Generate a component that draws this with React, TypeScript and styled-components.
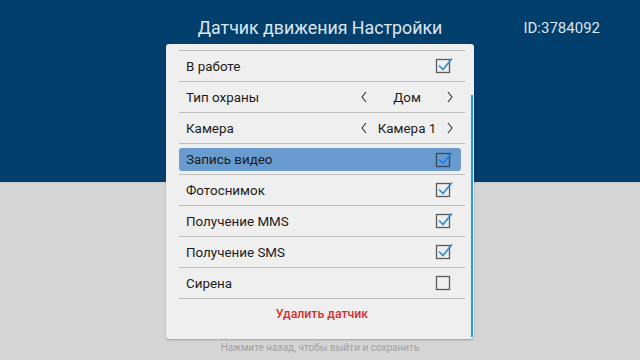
import React from 'react';
import styled, { createGlobalStyle } from 'styled-components';

const GlobalStyle = createGlobalStyle`
  html, body {
    margin: 0;
    padding: 0;
    width: 640px;
    height: 360px;
    overflow: hidden;
  }
  body {
    font-family: Roboto, "Noto Sans", "Liberation Sans", sans-serif;
  }
`

const Screen = styled.div`
  width: 640px;
  height: 360px;
  display: flex;
  flex-direction: column;
  align-items: center;
  background: linear-gradient(#023f6c 0, #023f6c 182px, #c9c9c9 182px, #d5d5d5 184px, #d5d5d5 100%);
`

const TopBar = styled.div`
  width: 100%;
  height: 44px;
  box-sizing: border-box;
  padding: 16px 40px 0 40px;
  display: grid;
  grid-template-columns: 1fr auto 1fr;
  align-items: start;
`

const Title = styled.div`
  grid-column: 2;
  font-size: 17.8px;
  line-height: 24px;
  color: #dde6ef;
`

const DeviceId = styled.div`
  grid-column: 3;
  justify-self: end;
  font-size: 15px;
  line-height: 24px;
  color: #dde6ef;
`

const Card = styled.div`
  position: relative;
  width: 308px;
  height: 295px;
  box-sizing: border-box;
  padding: 6px 9px 0 13px;
  background: #efefef;
  border-radius: 3px;
  box-shadow: 0 1px 2px rgba(0, 0, 0, 0.25);
`

const Scrollbar = styled.div`
  position: absolute;
  left: 305px;
  top: 51px;
  width: 2px;
  height: 242px;
  background: #2c9be2;
  box-shadow: 0 0 1px #8fd0f5;
`

const List = styled.div`
  display: flex;
  flex-direction: column;
`

const Row = styled.div<{ $active?: boolean }>`
  height: 31px;
  box-sizing: border-box;
  border-top: 1px solid #bcbcbc;
  padding: ${p => (p.$active ? '4px 4px 3px 0' : '0')};
`

const RowInner = styled.div<{ $active?: boolean }>`
  height: 100%;
  display: flex;
  align-items: center;
  padding: 0 ${p => (p.$active ? '8px' : '12px')} 0 7px;
  background: ${p => (p.$active ? '#6a9bcf' : 'transparent')};
  border-radius: 3px;
  font-size: 13.4px;
  color: #1b1b1b;
`

const Label = styled.span`
  flex: 1;
`

const Picker = styled.div`
  width: 94px;
  display: flex;
  align-items: center;
  margin-right: -1px;
`

const PickerValue = styled.span`
  flex: 1;
  text-align: center;
`

const DeleteRow = styled(Row)`
  display: flex;
  align-items: center;
  justify-content: center;
  font-size: 12.3px;
  font-weight: 500;
  color: #d4302c;
`

const Hint = styled.div`
  margin-top: 3px;
  font-size: 10px;
  color: #a2a2a2;
`

const CheckIcon = ({ checked, dim }: { checked: boolean; dim?: boolean }) => (
  <svg width="18" height="18" viewBox="0 0 18 18" style={{ marginTop: -2 }}>
    <rect x="1.5" y="3.5" width="13" height="13" fill="none" stroke={dim ? '#2e4966' : '#5c5c5c'} strokeWidth="1.3" />
    {checked && (
      <polyline points="4,9.5 8,13.5 17,2.5" fill="none" stroke={dim ? '#1f7fe6' : '#2a8fd8'} strokeWidth="1.7" />
    )}
  </svg>
)

const Chevron = ({ dir }: { dir: 'left' | 'right' }) => (
  <svg width="8" height="12" viewBox="0 0 8 12">
    <polyline
      points={dir === 'left' ? '6,1 2,6 6,11' : '2,1 6,6 2,11'}
      fill="none"
      stroke="#333"
      strokeWidth="1.1"
    />
  </svg>
)

type Item =
  | { kind: 'check'; label: string; checked: boolean; active?: boolean }
  | { kind: 'pick'; label: string; value: string };

const items: Item[] = [
  { kind: 'check', label: 'В работе', checked: true },
  { kind: 'pick', label: 'Тип охраны', value: 'Дом' },
  { kind: 'pick', label: 'Камера', value: 'Камера 1' },
  { kind: 'check', label: 'Запись видео', checked: true, active: true },
  { kind: 'check', label: 'Фотоснимок', checked: true },
  { kind: 'check', label: 'Получение MMS', checked: true },
  { kind: 'check', label: 'Получение SMS', checked: true },
  { kind: 'check', label: 'Сирена', checked: false },
]

export default () => {
  return (
    <Screen>
      <GlobalStyle />
      <TopBar>
        <Title>Датчик движения Настройки</Title>
        <DeviceId>ID:3784092</DeviceId>
      </TopBar>
      <Card>
        <List>
          {items.map(item => {
            const active = item.kind === 'check' && !!item.active
            return (
              <Row key={item.label} $active={active}>
                <RowInner $active={active}>
                  <Label>{item.label}</Label>
                  {item.kind === 'check' ? (
                    <CheckIcon checked={item.checked} dim={active} />
                  ) : (
                    <Picker>
                      <Chevron dir="left" />
                      <PickerValue>{item.value}</PickerValue>
                      <Chevron dir="right" />
                    </Picker>
                  )}
                </RowInner>
              </Row>
            )
          })}
          <DeleteRow>Удалить датчик</DeleteRow>
        </List>
        <Scrollbar />
      </Card>
      <Hint>Нажмите назад, чтобы выйти и сохранить</Hint>
    </Screen>
  );
}
